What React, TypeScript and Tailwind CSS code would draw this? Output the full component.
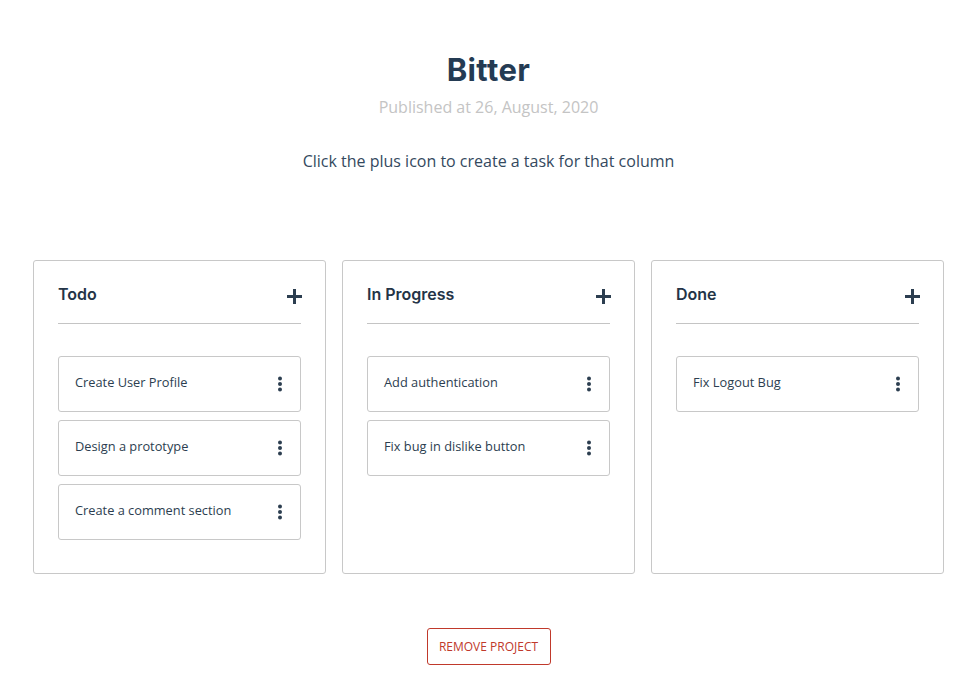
import React from "react";

const columns = [
  { title: "Todo", tasks: ["Create User Profile", "Design a prototype", "Create a comment section"] },
  { title: "In Progress", tasks: ["Add authentication", "Fix bug in dislike button"] },
  { title: "Done", tasks: ["Fix Logout Bug"] },
];

function Plus() {
  return (
    <svg width="15" height="15" viewBox="0 0 15 15" className="block">
      <rect x="6" y="0" width="3" height="15" fill="#2c3e50" />
      <rect x="0" y="6" width="15" height="3" fill="#2c3e50" />
    </svg>
  );
}

function Dots() {
  return (
    <svg width="6" height="16" viewBox="0 0 6 16" className="block">
      <circle cx="3" cy="2.5" r="2" fill="#2c3e50" />
      <circle cx="3" cy="8" r="2" fill="#2c3e50" />
      <circle cx="3" cy="13.5" r="2" fill="#2c3e50" />
    </svg>
  );
}

export default function App() {
  const body = { fontFamily: '"Open Sans", "Liberation Sans", sans-serif' };
  const head = { fontFamily: 'Inter, "Liberation Sans", sans-serif' };
  return (
    <div className="w-[972px] h-[688px] bg-white pl-[5px] flex flex-col items-center" style={body}>
      <h1 className="mt-[50px] text-[31px] leading-[40px] font-bold text-[#243b53] tracking-[0.4px]" style={head}>
        Bitter
      </h1>
      <p className="mt-[6px] text-[16px] leading-[22px] text-[#c4c4c4]">Published at 26, August, 2020</p>
      <p className="mt-[32px] text-[16px] leading-[22px] text-[#34495e]">Click the plus icon to create a task for that column</p>
      <div className="mt-[88px] w-full pl-[28px] flex gap-[16px]">
        {columns.map((col) => (
          <div
            key={col.title}
            className="w-[293px] h-[314px] border border-[#c8c8c8] rounded-[3px] px-[24px] pt-[20px]"
          >
            <div className="flex items-center justify-between h-[26px] border-b border-[#c4c4c4] box-content pb-[16px]">
              <span className="text-[16px] font-semibold text-[#243447]" style={head}>
                {col.title}
              </span>
              <span className="mr-[-1px] mt-[4px]">
                <Plus />
              </span>
            </div>
            <div className="mt-[32px] flex flex-col gap-[8px]">
              {col.tasks.map((t) => (
                <div
                  key={t}
                  className="h-[56px] border border-[#c8c8c8] rounded-[3px] pl-[16px] pr-[17px] flex items-center justify-between"
                >
                  <span className="text-[12.8px] text-[#2c3e50] mb-[2px]">{t}</span>
                  <Dots />
                </div>
              ))}
            </div>
          </div>
        ))}
      </div>
      <button className="mt-[54px] w-[124px] h-[37px] border border-[#c0392b] rounded-[3px] text-[12px] text-[#c0392b] uppercase bg-white">
        Remove Project
      </button>
    </div>
  );
}
